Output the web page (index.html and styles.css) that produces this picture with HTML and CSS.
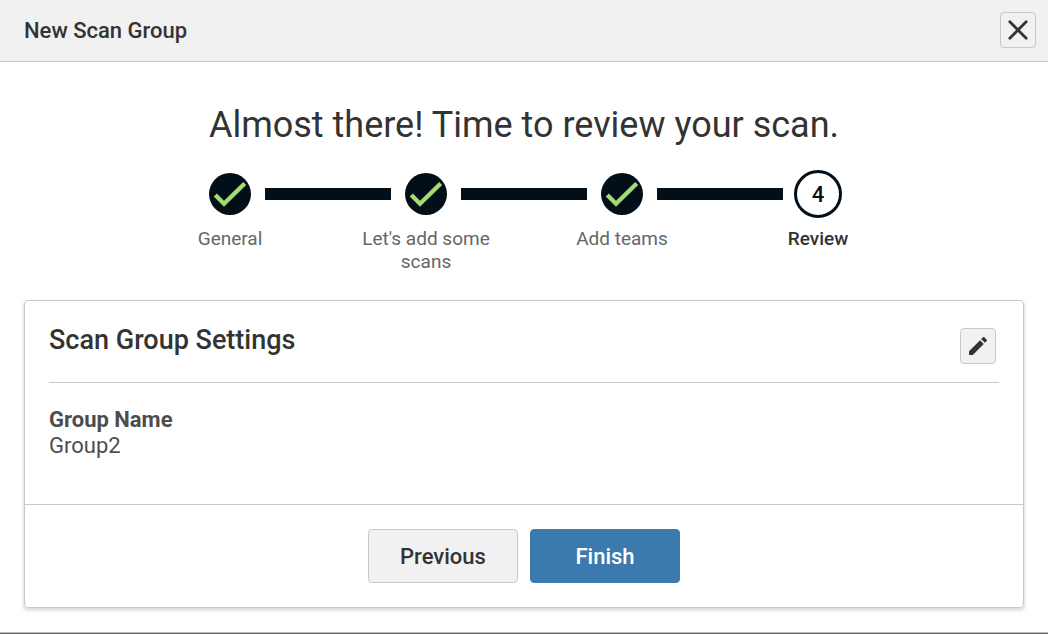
FILE: index.html
```html
<!DOCTYPE html>
<html lang="en">
<head>
    <meta charset="UTF-8">
    <meta name="viewport" content="width=device-width, initial-scale=1.0">
    <title>New Scan Group</title>
    <link rel="stylesheet" href="styles.css">
</head>
<body>
    <header class="header">
        <h1 class="header-title">New Scan Group</h1>
        <button type="button" class="icon-button close-button" aria-label="Close">
            <svg viewBox="0 0 24 24" aria-hidden="true">
                <path d="M3.8 3.8L20.2 20.2M20.2 3.8L3.8 20.2" fill="none" stroke="#333" stroke-width="2.8" stroke-linecap="round"/>
            </svg>
        </button>
    </header>

    <main class="content">
        <h2 class="title">Almost there! Time to review your scan.</h2>

        <ol class="steps">
            <li class="step">
                <div class="step-marker">
                    <svg class="step-dot" viewBox="0 0 48 48" aria-hidden="true">
                        <circle cx="24" cy="24" r="21" fill="#020f18"/>
                        <path d="M9.3 25L18 33.7L38.7 13.5" fill="none" stroke="#a2db73" stroke-width="4.4"/>
                    </svg>
                </div>
                <span class="step-label">General</span>
            </li>
            <li class="step">
                <div class="step-marker">
                    <svg class="step-dot" viewBox="0 0 48 48" aria-hidden="true">
                        <circle cx="24" cy="24" r="21" fill="#020f18"/>
                        <path d="M9.3 25L18 33.7L38.7 13.5" fill="none" stroke="#a2db73" stroke-width="4.4"/>
                    </svg>
                </div>
                <span class="step-label">Let's add some scans</span>
            </li>
            <li class="step">
                <div class="step-marker">
                    <svg class="step-dot" viewBox="0 0 48 48" aria-hidden="true">
                        <circle cx="24" cy="24" r="21" fill="#020f18"/>
                        <path d="M9.3 25L18 33.7L38.7 13.5" fill="none" stroke="#a2db73" stroke-width="4.4"/>
                    </svg>
                </div>
                <span class="step-label">Add teams</span>
            </li>
            <li class="step current" aria-current="step">
                <div class="step-marker">
                    <span class="step-dot step-number">4</span>
                </div>
                <span class="step-label">Review</span>
            </li>
        </ol>

        <section class="card">
            <div class="card-body">
                <div class="card-header">
                    <h3 class="card-title">Scan Group Settings</h3>
                    <button type="button" class="icon-button edit-button" aria-label="Edit">
                        <svg viewBox="0 0 24 24" aria-hidden="true">
                            <path fill="#333" d="M3 17.25V21h3.75L17.81 9.94l-3.75-3.75L3 17.25zM20.71 7.04c.39-.39.39-1.02 0-1.41l-2.34-2.34c-.39-.39-1.02-.39-1.41 0l-1.83 1.83 3.75 3.75 1.83-1.83z"/>
                        </svg>
                    </button>
                </div>
                <dl class="details">
                    <dt>Group Name</dt>
                    <dd>Group2</dd>
                </dl>
            </div>
            <div class="card-footer">
                <button type="button" class="button">Previous</button>
                <button type="button" class="button button-primary">Finish</button>
            </div>
        </section>
    </main>
    <div class="bottom-edge"></div>
</body>
</html>
```

FILE: styles.css
```css
* {
    margin: 0;
    padding: 0;
    box-sizing: border-box;
}

body {
    font-family: Roboto, Arial, sans-serif;
    font-size: 22px;
    line-height: 26px;
    background: #fff;
    color: #333;
    min-height: 100vh;
    display: flex;
    flex-direction: column;
}

/* Header */
.header {
    display: flex;
    align-items: center;
    justify-content: space-between;
    padding: 12px 12px 13px 24px;
    background: #f1f1f1;
    border-bottom: 1px solid #c8c8c8;
}

.header-title {
    font-size: 22px;
    font-weight: 500;
    line-height: 28px;
    padding-top: 2px;
}

.icon-button {
    display: flex;
    align-items: center;
    justify-content: center;
    width: 36px;
    height: 36px;
    background: #f1f1f1;
    border: 1px solid #c8c8c8;
    border-radius: 4px;
    cursor: pointer;
}

.icon-button svg {
    width: 24px;
    height: 24px;
    flex: none;
}

.content {
    flex: 1;
    padding: 41px 24px 24px;
}

.title {
    font-size: 36px;
    font-weight: 400;
    line-height: 44px;
    text-align: center;
    margin-bottom: 23px;
}

/* Steps */
.steps {
    display: flex;
    max-width: 784px;
    margin: 0 auto 27px;
    list-style: none;
}

.step {
    flex: 1;
    text-align: center;
}

.step-marker {
    display: flex;
    align-items: center;
    margin-bottom: 9px;
}

/* each marker carries half of the line on both sides */
.step-marker::before,
.step-marker::after {
    content: "";
    flex: 1;
    height: 12px;
    background: #020f18;
}

.step:first-child .step-marker::before,
.step:last-child .step-marker::after {
    background: none;
}

.step-dot {
    width: 48px;
    height: 48px;
    margin: 0 11px;
    flex: none;
}

.step-number {
    border: 3px solid #020f18;
    border-radius: 50%;
    color: #020f18;
    font-weight: 500;
    line-height: 43px;
}

.step-label {
    display: block;
    padding: 0 24px;
    font-size: 19px;
    line-height: 23px;
    color: #666;
}

.current .step-label {
    color: #333;
    font-weight: 500;
}

/* Card */
.card {
    border: 1px solid #c8c8c8;
    border-radius: 4px;
    box-shadow: 0 2px 3px 1px rgba(0, 0, 0, 0.13);
}

.card-body {
    padding: 24px 24px 45px;
}

.card-header {
    display: flex;
    align-items: flex-start;
    justify-content: space-between;
    padding-bottom: 18px;
    border-bottom: 1px solid #c8c8c8;
    margin-bottom: 24px;
}

.card-title {
    font-size: 27px;
    font-weight: 500;
    line-height: 31px;
}

.edit-button {
    margin: 3px 3px 0 0;
}

.details {
    color: #4d4d4d;
}

.details dt {
    font-weight: 700;
}

.card-footer {
    display: flex;
    justify-content: center;
    gap: 12px;
    padding: 24px;
    border-top: 1px solid #c8c8c8;
}

.button {
    width: 150px;
    height: 54px;
    font-family: inherit;
    font-size: 22px;
    font-weight: 500;
    color: #333;
    background: #f1f1f1;
    border: 1px solid #c8c8c8;
    border-radius: 4px;
    cursor: pointer;
}

.button-primary {
    color: #fff;
    background: #3c79ae;
    border-color: #3c79ae;
}

.bottom-edge {
    height: 2px;
    background: #666;
    border-top: 1px solid #bbb;
}
```
